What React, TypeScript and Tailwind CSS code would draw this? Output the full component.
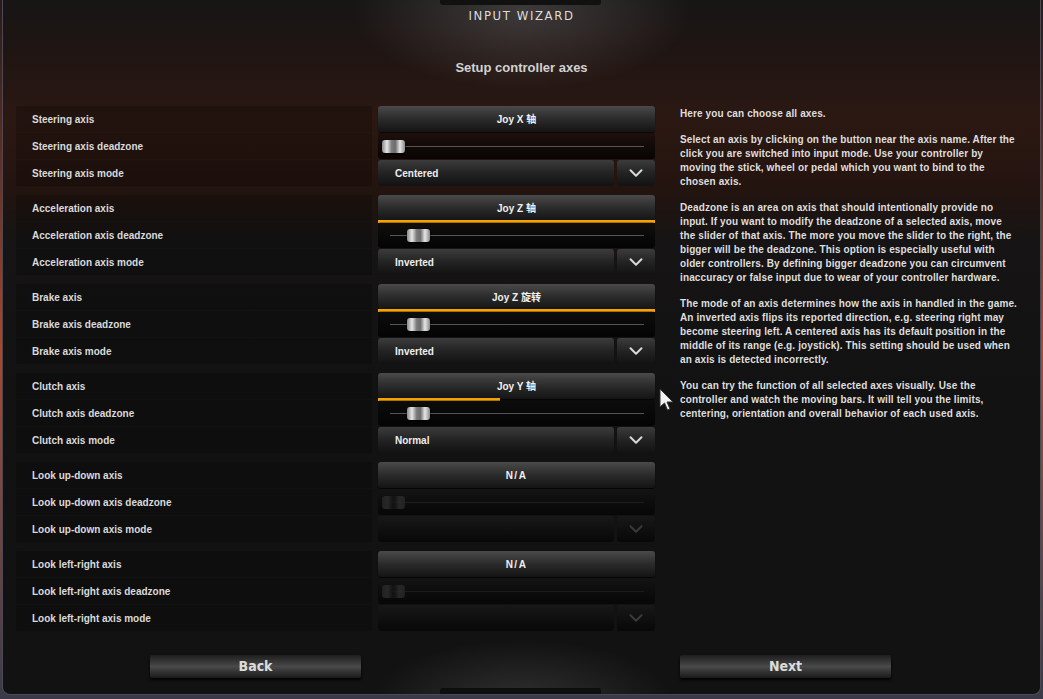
import { ChevronDown } from 'lucide-react';

type Group = {
  labels: string[];
  axis: string;
  mode: string;
  bar: number | null;
  thumb: string;
  enabled: boolean;
};

const groups: Group[] = [
  {
    labels: ['Steering axis', 'Steering axis deadzone', 'Steering axis mode'],
    axis: 'Joy X 轴',
    mode: 'Centered',
    bar: null,
    thumb: 'ml-[4px]',
    enabled: true,
  },
  {
    labels: ['Acceleration axis', 'Acceleration axis deadzone', 'Acceleration axis mode'],
    axis: 'Joy Z 轴',
    mode: 'Inverted',
    bar: 100,
    thumb: 'ml-[29px]',
    enabled: true,
  },
  {
    labels: ['Brake axis', 'Brake axis deadzone', 'Brake axis mode'],
    axis: 'Joy Z 旋转',
    mode: 'Inverted',
    bar: 100,
    thumb: 'ml-[29px]',
    enabled: true,
  },
  {
    labels: ['Clutch axis', 'Clutch axis deadzone', 'Clutch axis mode'],
    axis: 'Joy Y 轴',
    mode: 'Normal',
    bar: 44,
    thumb: 'ml-[29px]',
    enabled: true,
  },
  {
    labels: ['Look up-down axis', 'Look up-down axis deadzone', 'Look up-down axis mode'],
    axis: 'N/A',
    mode: '',
    bar: null,
    thumb: 'ml-[4px]',
    enabled: false,
  },
  {
    labels: ['Look left-right axis', 'Look left-right axis deadzone', 'Look left-right axis mode'],
    axis: 'N/A',
    mode: '',
    bar: null,
    thumb: 'ml-[4px]',
    enabled: false,
  },
];

const help: string[][] = [
  ['Here you can choose all axes.'],
  [
    'Select an axis by clicking on the button near the axis name. After the',
    'click you are switched into input mode. Use your controller by',
    'moving the stick, wheel or pedal which you want to bind to the',
    'chosen axis.',
  ],
  [
    'Deadzone is an area on axis that should intentionally provide no',
    'input. If you want to modify the deadzone of a selected axis, move',
    'the slider of that axis. The more you move the slider to the right, the',
    'bigger will be the deadzone. This option is especially useful with',
    'older controllers. By defining bigger deadzone you can circumvent',
    'inaccuracy or false input due to wear of your controller hardware.',
  ],
  [
    'The mode of an axis determines how the axis in handled in the game.',
    'An inverted axis flips its reported direction, e.g. steering right may',
    'become steering left. A centered axis has its default position in the',
    'middle of its range (e.g. joystick). This setting should be used when',
    'an axis is detected incorrectly.',
  ],
  [
    'You can try the function of all selected axes visually. Use the',
    'controller and watch the moving bars. It will tell you the limits,',
    'centering, orientation and overall behavior of each used axis.',
  ],
];

function Thumb({ dim }: { dim: boolean }) {
  return (
    <div
      className={
        dim
          ? 'h-[13px] w-[23px] rounded-[3px] bg-[linear-gradient(to_right,#262626,#2e2e2e_25%,#161616_45%,#161616_55%,#2e2e2e_75%,#262626)] opacity-80'
          : 'h-[13px] w-[23px] rounded-[3px] bg-[linear-gradient(to_right,#8a8a8a,#e6e6e6_22%,#7a7a7a_42%,#6c6c6c_58%,#e6e6e6_78%,#8a8a8a)] shadow-[0_1px_2px_rgba(0,0,0,0.8)]'
      }
    />
  );
}

function Controls({ g }: { g: Group }) {
  return (
    <div className="flex h-[81px] flex-col gap-px">
      {/* Axis button */}
      <div
        className={
          g.enabled
            ? 'relative flex h-[26px] items-center justify-center rounded-[3px] bg-linear-to-b from-[#4a4a4a] via-[#2b2b2b] to-[#141414] text-[10px] font-bold text-[#f0f0f0] shadow-[0_1px_1px_rgba(0,0,0,0.8)]'
            : 'relative flex h-[26px] items-center justify-center rounded-[3px] bg-linear-to-b from-[#4a4a4a] via-[#2b2b2b] to-[#141414] text-[10px] font-bold tracking-[1.5px] text-[#f0f0f0] shadow-[0_1px_1px_rgba(0,0,0,0.8)]'
        }
      >
        {g.axis}
        {g.bar !== null && (
          <div className="absolute -bottom-[2px] left-0 h-[3px] bg-[#f5a300]" style={{ width: `${g.bar}%` }} />
        )}
      </div>

      {/* Deadzone slider */}
      <div
        className={
          g.enabled
            ? 'relative flex h-[26px] items-center rounded-[3px] bg-linear-to-b from-black/30 to-black/80'
            : 'relative flex h-[26px] items-center rounded-[3px] bg-linear-to-b from-[#141414] to-[#070707]'
        }
      >
        <div
          className={
            g.enabled
              ? 'absolute left-[12px] right-[11px] top-1/2 h-px bg-[#555555]'
              : 'absolute left-[12px] right-[11px] top-1/2 h-px bg-[#1d1d1d]'
          }
        />
        <div className={`relative ${g.thumb}`}>
          <Thumb dim={!g.enabled} />
        </div>
      </div>

      {/* Mode dropdown */}
      <div className="flex h-[26px] gap-[3px]">
        <div
          className={
            g.enabled
              ? 'flex flex-1 items-center rounded-[3px] bg-linear-to-b from-[#3c3c3c] via-[#232323] to-[#121212] pl-[17px] text-[10px] font-bold text-[#eeeeee]'
              : 'flex flex-1 items-center rounded-[3px] bg-linear-to-b from-[#181818] to-[#080808] pl-[17px]'
          }
        >
          {g.mode}
        </div>
        <div
          className={
            g.enabled
              ? 'flex w-[38px] items-center justify-center rounded-[3px] bg-linear-to-b from-[#3c3c3c] via-[#232323] to-[#121212] text-[#d8d8d8]'
              : 'flex w-[38px] items-center justify-center rounded-[3px] bg-linear-to-b from-[#181818] to-[#080808] text-[#3a3a3a]'
          }
        >
          <ChevronDown size={22} strokeWidth={2.2} />
        </div>
      </div>
    </div>
  );
}

function WizardButton({ label }: { label: string }) {
  return (
    <div className="flex h-[23px] w-[211px] items-center justify-center rounded-[2px] bg-linear-to-b from-[#1e1e1e] via-[#4a4a4a] to-[#1a1a1a] font-['DejaVu_Sans_Condensed',sans-serif] text-[14px] font-bold text-[#dcdcdc] shadow-[0_2px_3px_rgba(0,0,0,0.9)]">
      {label}
    </div>
  );
}

export default function App() {
  return (
    <div className="h-[699px] w-[1043px] overflow-hidden bg-linear-to-b from-[#2a1a18] via-[#b04626] to-[#3a3a48] font-['Liberation_Sans','Noto_Sans_CJK_SC',sans-serif]">
      <div className="relative mx-[2px] h-[695px] overflow-hidden rounded-b-[8px] border-x border-b border-[#4a4a56] bg-[linear-gradient(to_bottom,#171515_0px,#1f1513_50px,#2b1812_120px,#24140f_185px,#161414_240px,#121212_400px,#121212_100%)]">
        {/* top and bottom glows */}
        <div className="pointer-events-none absolute inset-0 bg-[radial-gradient(ellipse_170px_80px_at_519px_10px,rgba(255,255,255,0.16),transparent)]" />
        <div className="pointer-events-none absolute inset-0 bg-[radial-gradient(ellipse_150px_60px_at_519px_700px,rgba(255,255,255,0.12),transparent)]" />
        <div className="absolute left-[437px] top-0 h-[5px] w-[161px] rounded-b-[3px] bg-[#111111]" />
        <div className="absolute bottom-0 left-[437px] h-[6px] w-[161px] rounded-t-[3px] bg-[#0e0e0e]" />

        <div className="relative flex h-[106px] flex-col items-center">
          <div className="mt-[8px] h-[16px] font-['DejaVu_Sans_Condensed',sans-serif] text-[13px] leading-[16px] tracking-[1.6px] text-[#dcdcdc]">
            INPUT WIZARD
          </div>
          <div className="mt-[36px] h-[16px] text-[13px] font-bold leading-[16px] text-[#d2d2d2]">
            Setup controller axes
          </div>
        </div>

        <div className="relative flex pl-[13px]">
          {/* Labels */}
          <div className="flex w-[356px] flex-col gap-[8px]">
            {groups.map((g) => (
              <div key={g.labels[0]} className="flex h-[81px] flex-col rounded-[2px] bg-black/20">
                {g.labels.map((l) => (
                  <div
                    key={l}
                    className="flex h-[27px] items-center border-b border-white/[0.015] pl-[16px] text-[10px] font-bold text-[#dadada]"
                  >
                    {l}
                  </div>
                ))}
              </div>
            ))}
          </div>

          {/* Controls */}
          <div className="ml-[6px] flex w-[277px] flex-col gap-[8px]">
            {groups.map((g) => (
              <Controls key={g.labels[0]} g={g} />
            ))}
          </div>

          {/* Help text */}
          <div className="ml-[25px] mt-px flex flex-col gap-[12px] text-[10px] font-bold leading-[14px] tracking-[0.12px] text-[#dedede]">
            {help.map((p, i) => (
              <div key={i}>
                {p.map((line) => (
                  <div key={line} className="whitespace-nowrap">
                    {line}
                  </div>
                ))}
              </div>
            ))}
          </div>
        </div>

        <div className="relative mt-[23px] flex pl-[147px]">
          <WizardButton label="Back" />
          <div className="ml-[319px]">
            <WizardButton label="Next" />
          </div>
        </div>

        {/* mouse cursor */}
        <svg className="absolute left-[656px] top-[388px]" width="16" height="24" viewBox="0 0 16 24">
          <path d="M1 1 L1 19 L5.5 15 L8.5 22 L11 21 L8 14 L14 14 Z" fill="#f2f2f2" stroke="#333" strokeWidth="1" />
        </svg>
      </div>
    </div>
  );
}
